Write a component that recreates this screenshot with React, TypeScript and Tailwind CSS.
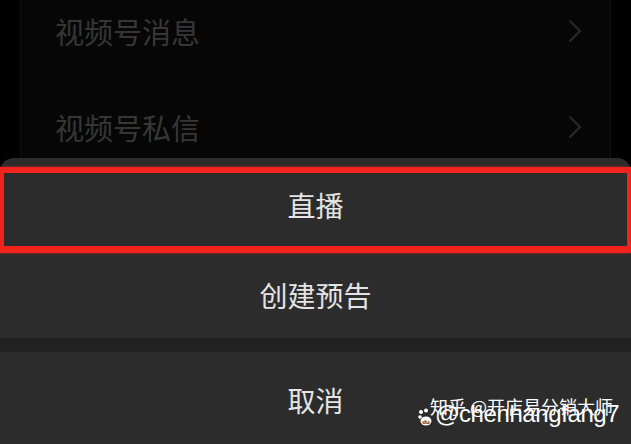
import React from "react";

const cjk = { fontFamily: '"Noto Sans CJK SC", "Noto Sans", sans-serif' };

function Chevron() {
  return (
    <svg width="14" height="24" viewBox="0 0 14 24" fill="none">
      <path d="M2 2 L12 12 L2 22" stroke="#2a2a2a" strokeWidth="2" strokeLinecap="round" strokeLinejoin="round" />
    </svg>
  );
}

function PawMark() {
  return (
    <svg width="14" height="18" viewBox="0 0 14 18">
      <circle cx="3" cy="4" r="2" fill="#fff" />
      <circle cx="8" cy="2.5" r="2" fill="#fff" />
      <circle cx="2" cy="9" r="1.8" fill="#fff" />
      <ellipse cx="8" cy="13" rx="5.5" ry="4.5" fill="#fff" />
      <text x="8" y="15.5" textAnchor="middle" fontSize="6" fontFamily="Liberation Sans, sans-serif" fontWeight="700" fill="#2c2c2c">du</text>
    </svg>
  );
}

function MenuRow({ label }: { label: string }) {
  return (
    <div className="h-[96px] flex items-center justify-between pl-[34px] pr-[28px]">
      <span className="text-[29px] leading-none text-[#363636]" style={cjk}>{label}</span>
      <Chevron />
    </div>
  );
}

export default function App() {
  return (
    <div className="w-[631px] h-[444px] bg-black overflow-hidden relative flex flex-col" style={cjk}>
      {/* dimmed settings list behind the sheet */}
      <div className="h-[158px] shrink-0 px-[20px] overflow-hidden">
        <div className="-mt-[17px] bg-[#060606] border-x border-[#101010] h-[200px]">
          <MenuRow label="视频号消息" />
          <MenuRow label="视频号私信" />
        </div>
      </div>

      {/* action sheet */}
      <div className="flex-1 bg-[#2c2c2c] rounded-t-[14px] flex flex-col">
        <div className="relative h-[94px] flex items-center justify-center">
          <span className="text-[28px] leading-none text-[#e4e4e4]">直播</span>
          <div className="absolute top-[9px] left-0 right-0 h-[86px] border-[#f0241c] border-t-[6px] border-b-[7px] border-x-[4px] shadow-[0_0_3px_rgba(240,36,28,0.6)]" />
        </div>
        <div className="h-[86px] flex items-center justify-center">
          <span className="text-[28px] leading-none text-[#e4e4e4]">创建预告</span>
        </div>
        <div className="h-[14px] bg-[#212121]" />
        <div className="h-[96px] flex items-center justify-center">
          <span className="text-[28px] leading-none text-[#e4e4e4]">取消</span>
        </div>
      </div>

      {/* watermark */}
      <div className="absolute left-[418px] top-[396px] flex items-end gap-[1px] text-white">
        <div className="mb-[2px]">
          <PawMark />
        </div>
        <div className="relative h-[32px] w-[200px]">
          <span className="absolute left-[-3px] top-[1px] text-[18px] leading-none whitespace-nowrap" style={cjk}>知乎 @开店易分销大师</span>
          <span
            className="absolute left-[2px] top-[6px] text-[24px] leading-none whitespace-nowrap tracking-[-0.4px]"
            style={{ fontFamily: '"Liberation Sans", Arial, sans-serif' }}
          >
            @chenhangfang7
          </span>
        </div>
      </div>
    </div>
  );
}
